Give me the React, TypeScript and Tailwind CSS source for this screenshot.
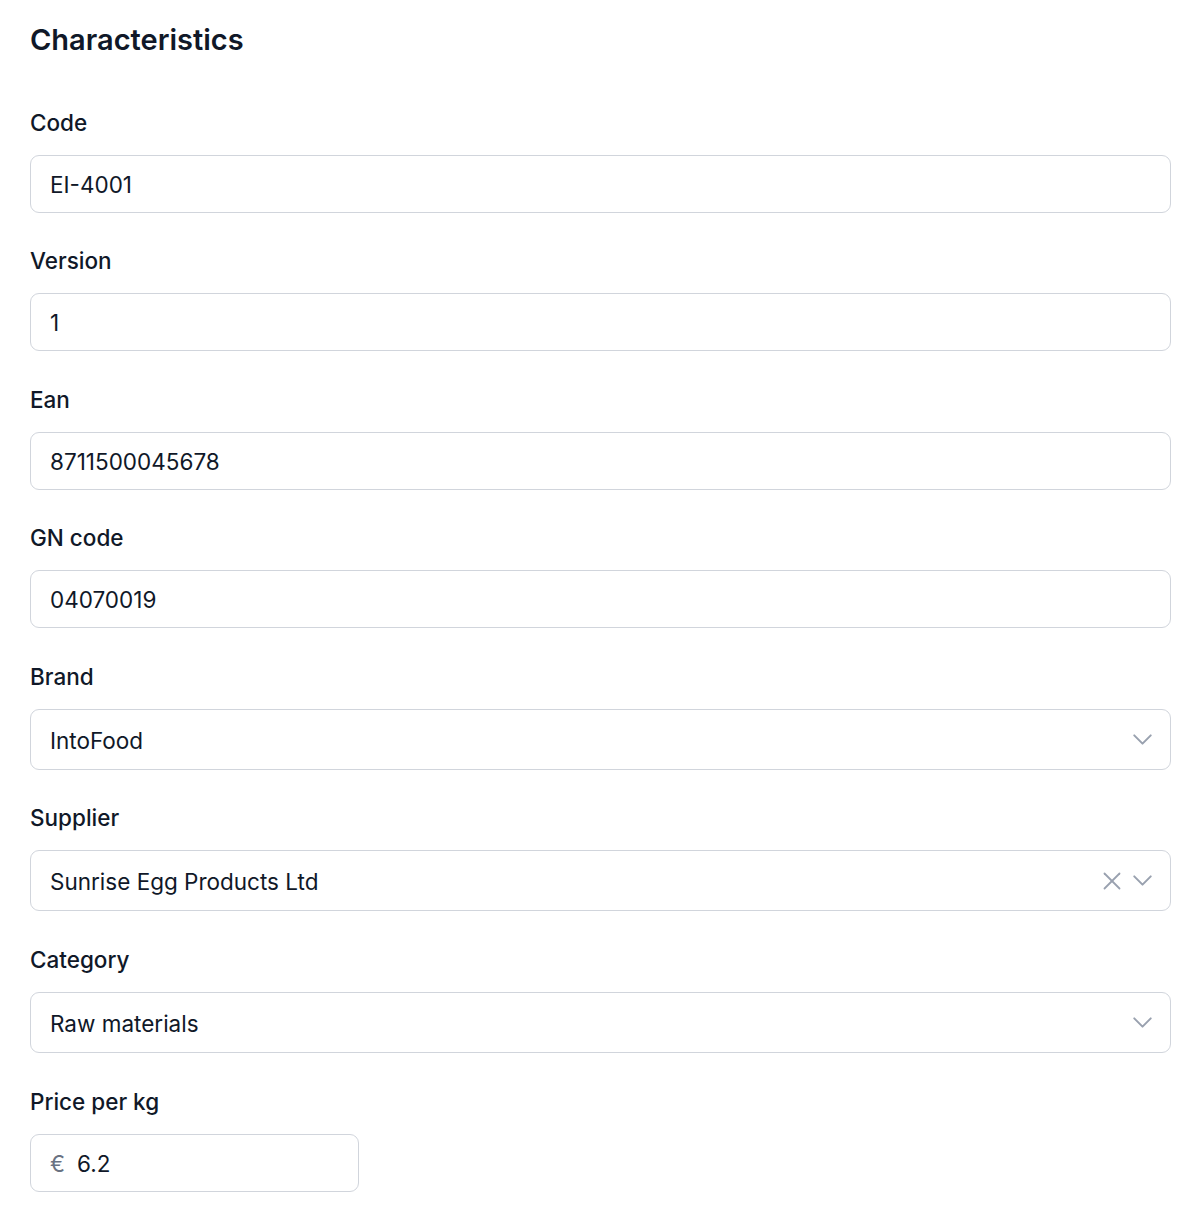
import React from "react";
import { ChevronDown, X } from "lucide-react";

function Label({ children }: { children: React.ReactNode }) {
  return <div className="h-[30px] pt-[1px] leading-[30px] text-[22.5px] font-medium text-gray-900 mb-[18px]">{children}</div>;
}

function TextField({ label, value }: { label: string; value: string }) {
  return (
    <div>
      <Label>{label}</Label>
      <div className="h-[58px] rounded-[9px] border-[1.5px] border-gray-300 bg-white flex items-center px-[19px] pt-[2px] text-[22.5px] text-gray-900">
        {value}
      </div>
    </div>
  );
}

function SelectField({ label, value, clearable }: { label: string; value: string; clearable?: boolean }) {
  return (
    <div>
      <Label>{label}</Label>
      <div className="h-[61px] rounded-[9px] border-[1.5px] border-gray-300 bg-white flex items-center pl-[19px] pr-[11px] text-[22.5px] text-gray-900">
        <span className="flex-1 pt-[2px]">{value}</span>
        {clearable && <X className="text-gray-400 -mr-[1px]" size={30} strokeWidth={1.45} />}
        <ChevronDown className="text-gray-400" size={33} strokeWidth={1.45} />
      </div>
    </div>
  );
}

export default function App() {
  return (
    <div className="bg-white min-h-[1213px] px-[30px] pt-[21.5px]" style={{ fontFamily: "Inter, 'Noto Sans', sans-serif" }}>
      <h2 className="text-[29px] leading-[36px] font-semibold text-gray-900 mb-[49px]">Characteristics</h2>
      <div className="flex flex-col gap-[32.6px] w-[1141px]">
        <TextField label="Code" value="EI-4001" />
        <TextField label="Version" value="1" />
        <TextField label="Ean" value="8711500045678" />
        <TextField label="GN code" value="04070019" />
        <SelectField label="Brand" value="IntoFood" />
        <SelectField label="Supplier" value="Sunrise Egg Products Ltd" clearable />
        <SelectField label="Category" value="Raw materials" />
        <div>
          <Label>Price per kg</Label>
          <div className="w-[329px] h-[58px] rounded-[9px] border-[1.5px] border-gray-300 bg-white flex items-center px-[19px] pt-[2px] text-[22.5px] text-gray-900">
            <span className="text-gray-500 mr-[12px]">€</span>
            <span>6.2</span>
          </div>
        </div>
      </div>
    </div>
  );
}
